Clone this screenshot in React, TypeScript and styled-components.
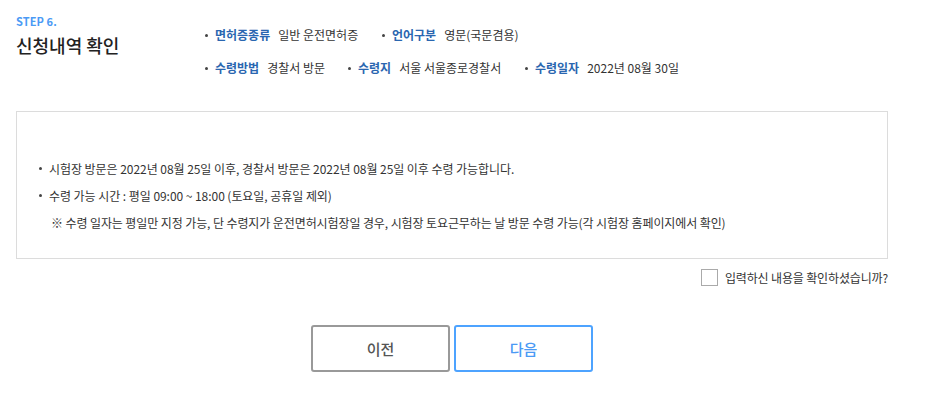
import React from "react";
import styled, { createGlobalStyle } from "styled-components";

const Global = createGlobalStyle`
  html, body { margin: 0; padding: 0; background: #fff; }
  body { font-family: "Noto Sans CJK KR", "Noto Sans", sans-serif; color: #333; }
`;

const Page = styled.div`
  width: 872px;
  padding: 14px 0 0 16px;
`;

const Header = styled.div`
  display: flex;
  align-items: flex-start;
  height: 97px;
`;

const TitleBlock = styled.div`
  width: 189px;
  flex: none;
`;

const Step = styled.div`
  font-size: 11px;
  font-weight: 700;
  color: #4a9af5;
  line-height: 15px;
  letter-spacing: 0.1px;
`;

const Title = styled.h2`
  margin: 3px 0 0;
  font-size: 18px;
  font-weight: 500;
  color: #222;
  line-height: 26px;
`;

const InfoList = styled.div`
  display: flex;
  flex-direction: column;
  gap: 13px;
  padding-top: 11px;
`;

const InfoRow = styled.div`
  display: flex;
`;

const InfoItem = styled.div<{ $w?: number }>`
  display: flex;
  align-items: center;
  width: ${(p) => (p.$w ? `${p.$w}px` : "auto")};
  font-size: 12px;
  line-height: 20px;
  white-space: nowrap;
  &::before {
    content: "";
    width: 3px;
    height: 3px;
    background: #444;
    border-radius: 50%;
    margin-right: 7px;
  }
`;

const Label = styled.span`
  color: #2a66b0;
  font-weight: 700;
  margin-right: 8px;
`;

const Value = styled.span`
  color: #333;
`;

const NoticeBox = styled.div`
  border: 1px solid #dcdcdc;
  height: 148px;
  padding: 46px 0 0 22px;
  box-sizing: border-box;
  display: flex;
  flex-direction: column;
  gap: 6px;
`;

const Bullet = styled.div`
  display: flex;
  align-items: center;
  font-size: 12px;
  line-height: 21px;
  color: #333;
  letter-spacing: -0.05px;
  &::before {
    content: "";
    width: 3px;
    height: 3px;
    background: #444;
    border-radius: 50%;
    margin-right: 7px;
  }
`;

const Note = styled.div`
  font-size: 12px;
  line-height: 21px;
  color: #333;
  padding-left: 12px;
  letter-spacing: -0.1px;
`;

const ConfirmRow = styled.label`
  display: flex;
  justify-content: flex-end;
  align-items: center;
  gap: 7px;
  height: 17px;
  margin-top: 10px;
  font-size: 12px;
  color: #333;
  letter-spacing: -0.15px;
`;

const Check = styled.span`
  width: 15px;
  height: 15px;
  border: 1px solid #aaa;
  background: #fff;
  display: inline-block;
`;

const Buttons = styled.div`
  display: flex;
  justify-content: center;
  gap: 4px;
  margin-top: 39px;
`;

const Btn = styled.button<{ $primary?: boolean }>`
  width: 139px;
  height: 47px;
  box-sizing: border-box;
  border: 2px solid ${(p) => (p.$primary ? "#4da3ff" : "#999")};
  border-radius: 3px;
  background: #fff;
  color: ${(p) => (p.$primary ? "#4a9af5" : "#555")};
  font-family: inherit;
  font-size: 15px;
  font-weight: 500;
`;

export default function App() {
  return (
    <>
      <Global />
      <Page>
        <Header>
          <TitleBlock>
            <Step>STEP 6.</Step>
            <Title>신청내역 확인</Title>
          </TitleBlock>
          <InfoList>
            <InfoRow>
              <InfoItem $w={177}>
                <Label>면허증종류</Label>
                <Value>일반 운전면허증</Value>
              </InfoItem>
              <InfoItem>
                <Label>언어구분</Label>
                <Value>영문(국문겸용)</Value>
              </InfoItem>
            </InfoRow>
            <InfoRow>
              <InfoItem $w={143}>
                <Label>수령방법</Label>
                <Value>경찰서 방문</Value>
              </InfoItem>
              <InfoItem $w={177}>
                <Label>수령지</Label>
                <Value>서울 서울종로경찰서</Value>
              </InfoItem>
              <InfoItem>
                <Label>수령일자</Label>
                <Value>2022년 08월 30일</Value>
              </InfoItem>
            </InfoRow>
          </InfoList>
        </Header>
        <NoticeBox>
          <Bullet>시험장 방문은 2022년 08월 25일 이후, 경찰서 방문은 2022년 08월 25일 이후 수령 가능합니다.</Bullet>
          <Bullet>수령 가능 시간 : 평일 09:00 ~ 18:00 (토요일, 공휴일 제외)</Bullet>
          <Note>※ 수령 일자는 평일만 지정 가능, 단 수령지가 운전면허시험장일 경우, 시험장 토요근무하는 날 방문 수령 가능(각 시험장 홈페이지에서 확인)</Note>
        </NoticeBox>
        <ConfirmRow>
          <Check />
          입력하신 내용을 확인하셨습니까?
        </ConfirmRow>
        <Buttons>
          <Btn>이전</Btn>
          <Btn $primary>다음</Btn>
        </Buttons>
      </Page>
    </>
  );
}
